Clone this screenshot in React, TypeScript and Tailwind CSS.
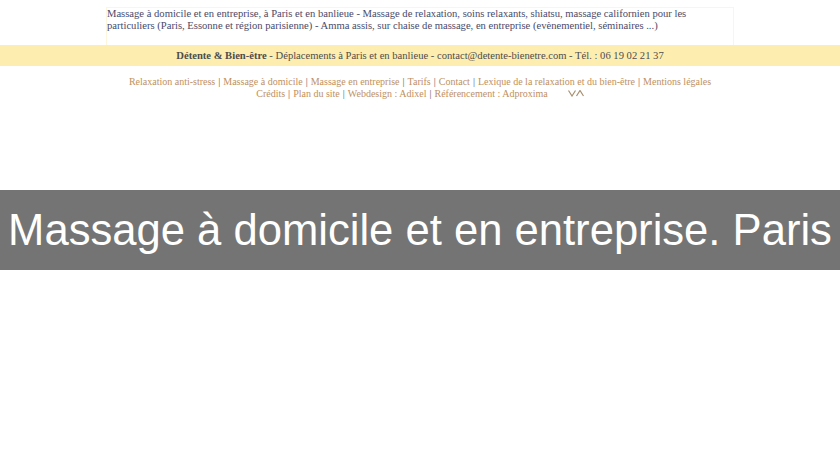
const links1 = [
  "Relaxation anti-stress",
  "Massage à domicile",
  "Massage en entreprise",
  "Tarifs",
  "Contact",
  "Lexique de la relaxation et du bien-être",
  "Mentions légales",
];
const links2 = ["Crédits", "Plan du site", "Webdesign : Adixel", "Référencement : Adproxima"];

export default function App() {
  return (
    <div className="h-[460px] w-[840px] overflow-hidden bg-white font-['Liberation_Serif',serif]">
      <div className="ml-[106px] mt-[7px] h-[38px] w-[628px] border border-b-0 border-[#fdf6dc] text-[10.6px] leading-[12px] text-[#4a4a68]">
        <p className="whitespace-nowrap">
          Massage à domicile et en entreprise, à Paris et en banlieue - Massage de relaxation, soins relaxants, shiatsu, massage californien pour les
          <br />
          particuliers (Paris, Essonne et région parisienne) - Amma assis, sur chaise de massage, en entreprise (evènementiel, séminaires ...)
        </p>
      </div>
      <div className="flex h-[21px] items-center justify-center bg-[#fdeeb0] text-[10.6px] text-[#4d4d4d]">
        <span>
          <b>Détente &amp; Bien-être</b> - Déplacements à Paris et en banlieue - contact@detente-bienetre.com - Tél. : 06 19 02 21 37
        </span>
      </div>
      <div className="mt-[10px] flex justify-center gap-[3px] text-[10px] leading-[12px] text-[#c09060]">
        {links1.map((l, i) => (
          <span key={l} className="flex gap-[3px] whitespace-nowrap">
            {l}
            {i < links1.length - 1 && <span className="text-[#555]">|</span>}
          </span>
        ))}
      </div>
      <div className="flex justify-center gap-[3px] text-[10px] leading-[12px] text-[#c09060]">
        {links2.map((l, i) => (
          <span key={l} className="flex gap-[3px] whitespace-nowrap">
            {l}
            {i < links2.length - 1 && <span className="text-[#555]">|</span>}
          </span>
        ))}
        <svg className="ml-[17px] mt-[2px]" width="16" height="7" viewBox="0 0 16 7" fill="none" stroke="#a89070" strokeWidth="1.2">
          <path d="M0.5 0.5L4 6L7.5 0.5" />
          <path d="M8.5 6L12 0.5L15.5 6" />
        </svg>
      </div>
      <div className="mt-[90px] flex h-20 items-center justify-center whitespace-nowrap bg-[#747474] pt-[2px] font-['Liberation_Sans',sans-serif] text-[43.6px] text-white">
        Massage à domicile et en entreprise. Paris
      </div>
    </div>
  );
}
